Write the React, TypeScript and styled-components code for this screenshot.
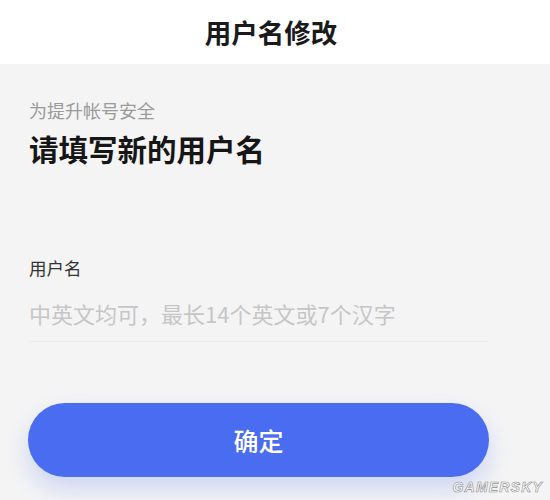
import React, { useState } from 'react'
import styled, { createGlobalStyle } from 'styled-components'

const GlobalStyle = createGlobalStyle`
  html, body {
    margin: 0;
    padding: 0;
    background: #f4f4f5;
  }
  body {
    font-family: "Noto Sans CJK SC", "Noto Sans", sans-serif;
  }
`

const Screen = styled.div`
  position: relative;
  width: 550px;
  height: 500px;
  overflow: hidden;
  background: #f4f4f5;
  display: flex;
  flex-direction: column;
`

const Header = styled.div`
  height: 64px;
  background: #ffffff;
  display: flex;
  align-items: center;
  justify-content: center;
`

const Title = styled.h1`
  margin: 0 8px 0 0;
  font-size: 26.5px;
  font-weight: 700;
  color: #1a1a1a;
  line-height: 1;
`

const Body = styled.div`
  padding: 0 29px;
  display: flex;
  flex-direction: column;
`

const Hint = styled.div`
  margin-top: 34px;
  font-size: 18px;
  line-height: 24px;
  color: #9a9a9a;
`

const Heading = styled.div`
  margin-top: 7px;
  font-size: 29.5px;
  font-weight: 700;
  line-height: 38px;
  color: #161616;
`

const Field = styled.label`
  margin-top: 89px;
  display: flex;
  flex-direction: column;
`

const FieldLabel = styled.span`
  font-size: 17.5px;
  line-height: 24px;
  color: #333333;
`

const Input = styled.input`
  margin-top: 19px;
  margin-right: 33px;
  padding: 0 0 14px;
  border: none;
  border-bottom: 1px solid #ebebeb;
  background: transparent;
  outline: none;
  font-family: inherit;
  font-size: 22px;
  line-height: 28px;
  color: #222;
  &::placeholder {
    color: #c6c6c6;
  }
`

const Submit = styled.button`
  margin-top: 61px;
  margin-left: -1px;
  width: 461px;
  height: 74px;
  border: none;
  border-radius: 37px;
  background: #4a6cf0;
  color: #ffffff;
  font-family: inherit;
  font-size: 25px;
  font-weight: 500;
  box-shadow: 0 12px 22px rgba(74, 108, 240, 0.22);
  cursor: pointer;
`

const Watermark = styled.span`
  position: absolute;
  right: 7px;
  bottom: 5px;
  font-family: "Liberation Sans", sans-serif;
  font-size: 14px;
  font-weight: 700;
  font-style: italic;
  letter-spacing: 1.2px;
  color: #ffffff;
  -webkit-text-stroke: 0.6px #8c8c8c;
`

export default function App() {
  const [name, setName] = useState('')

  return (
    <Screen>
      <GlobalStyle />
      <Header>
        <Title>用户名修改</Title>
      </Header>
      <Body>
        <Hint>为提升帐号安全</Hint>
        <Heading>请填写新的用户名</Heading>
        <Field>
          <FieldLabel>用户名</FieldLabel>
          <Input
            value={name}
            onChange={e => setName(e.target.value)}
            placeholder="中英文均可，最长14个英文或7个汉字"
          />
        </Field>
        <Submit>确定</Submit>
      </Body>
      <Watermark>GAMERSKY</Watermark>
    </Screen>
  )
}
